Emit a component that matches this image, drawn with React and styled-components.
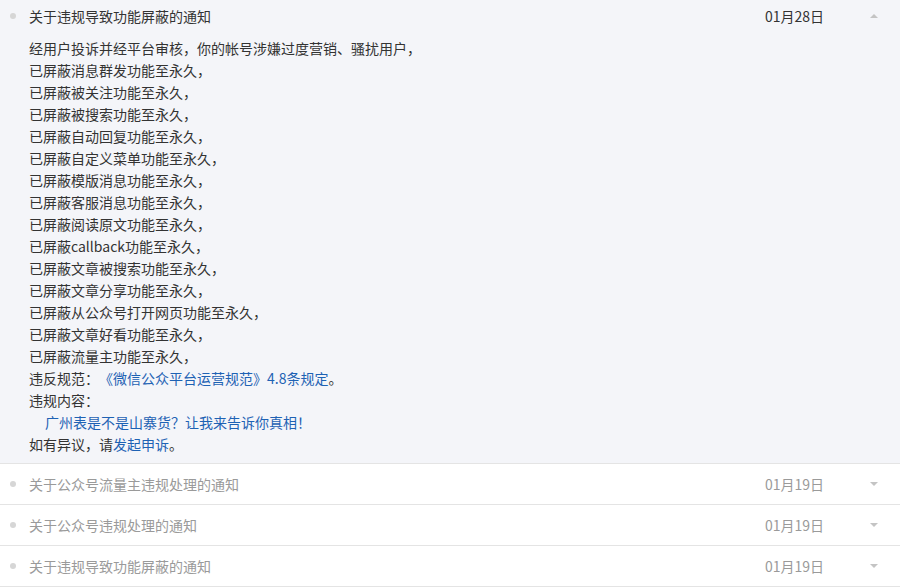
import React from 'react'
import styled, {createGlobalStyle} from 'styled-components'

const GlobalStyle = createGlobalStyle`
  html, body {
    margin: 0;
    padding: 0;
    background: #fff;
  }
  body {
    font-family: "Microsoft YaHei", "Noto Sans CJK SC", "Noto Sans", sans-serif;
    font-size: 14px;
    text-spacing-trim: space-all;
  }
`

const List = styled.ul`
  width: 900px;
  margin: 0;
  padding: 0;
  list-style: none;
`

const Item = styled.li`
  border-bottom: 1px solid #e4e4e4;
  background: ${props => props.open ? '#f4f5f9' : '#fff'};
`

const Header = styled.div`
  display: flex;
  align-items: center;
  height: ${props => props.open ? '32px' : '40px'};
  padding-left: 10px;
  color: ${props => props.open ? '#333' : '#9a9a9a'};
`

const Dot = styled.i`
  width: 6px;
  height: 6px;
  border-radius: 50%;
  background: #d6d6d6;
  margin-right: 13px;
  flex: none;
`

const Title = styled.span`
  flex: 1;
`

const Date = styled.span`
  width: 83px;
`

const ArrowBox = styled.span`
  width: 52px;
  display: flex;
  justify-content: center;
  align-items: center;
`

const Arrow = styled.i`
  width: 0;
  height: 0;
  border-left: 4px solid transparent;
  border-right: 4px solid transparent;
  ${props => props.up
    ? 'border-bottom: 4px solid #c4c4c4;'
    : 'border-top: 4px solid #c4c4c4;'}
`

const Body = styled.div`
  padding: 5px 0 8px 29px;
  color: #333;
  line-height: 22px;
`

const Line = styled.p`
  margin: 0;
  padding-left: ${props => props.indent ? '16px' : '0'};
`

const Link = styled.a`
  color: #1e62b4;
  text-decoration: none;
`

const blocked = [
  '消息群发', '被关注', '被搜索', '自动回复', '自定义菜单', '模版消息',
  '客服消息', '阅读原文', 'callback', '文章被搜索', '文章分享',
  '从公众号打开网页', '文章好看', '流量主',
]

const others = [
  '关于公众号流量主违规处理的通知',
  '关于公众号违规处理的通知',
  '关于违规导致功能屏蔽的通知',
]

function App(){
    return (
        <>
            <GlobalStyle />
            <List>
                <Item open>
                    <Header open>
                        <Dot />
                        <Title>关于违规导致功能屏蔽的通知</Title>
                        <Date>01月28日</Date>
                        <ArrowBox><Arrow up /></ArrowBox>
                    </Header>
                    <Body>
                        <Line>经用户投诉并经平台审核，你的帐号涉嫌过度营销、骚扰用户，</Line>
                        {blocked.map(b => (
                            <Line key={b}>已屏蔽{b}功能至永久，</Line>
                        ))}
                        <Line>违反规范：<Link href="#">《微信公众平台运营规范》4.8条规定</Link>。</Line>
                        <Line>违规内容：</Line>
                        <Line indent><Link href="#">广州表是不是山寨货？让我来告诉你真相！</Link></Line>
                        <Line>如有异议，请<Link href="#">发起申诉</Link>。</Line>
                    </Body>
                </Item>
                {others.map((t, i) => (
                    <Item key={i}>
                        <Header>
                            <Dot />
                            <Title>{t}</Title>
                            <Date>01月19日</Date>
                            <ArrowBox><Arrow /></ArrowBox>
                        </Header>
                    </Item>
                ))}
            </List>
        </>
    )
}

export default App
